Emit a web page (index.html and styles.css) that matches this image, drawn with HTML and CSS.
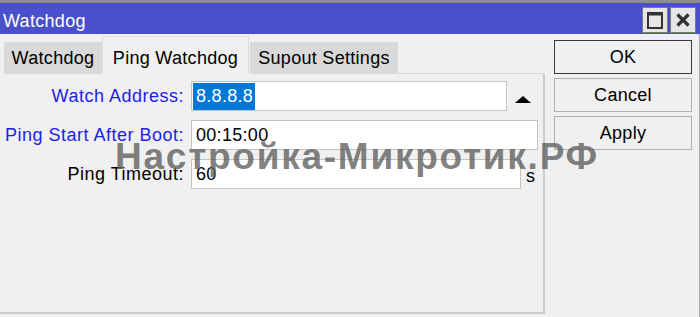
FILE: index.html
```html
<!DOCTYPE html>
<html>
<head>
<meta charset="utf-8">
<link rel="stylesheet" href="styles.css">
</head>
<body>
<div class="window">
  <div class="topstrip"></div>
  <div class="titlebar">
    <span class="title">Watchdog</span>
    <div class="winbtns">
      <div class="winbtn">
        <svg width="24" height="24" viewBox="0 0 24 24"><rect x="5" y="5" width="14" height="15" fill="none" stroke="#333" stroke-width="2"/><rect x="5" y="4.5" width="14" height="3" fill="#333"/></svg>
      </div>
      <div class="winbtn">
        <svg width="24" height="24" viewBox="0 0 24 24"><path d="M6.5 6.5 L17.5 17.5 M17.5 6.5 L6.5 17.5" stroke="#333" stroke-width="3.2" fill="none"/></svg>
      </div>
    </div>
  </div>
  <div class="main">
    <div class="left">
      <div class="tabs">
        <div class="tab tab-wd">Watchdog</div>
        <div class="tab tab-ping active">Ping Watchdog</div>
        <div class="tab tab-sup">Supout Settings</div>
        <div class="tab-fill"></div>
      </div>
      <div class="panel">
        <div class="form">
          <div class="label blue">Watch Address:</div>
          <div class="field">
            <div class="input w1"><span class="sel">8.8.8.8</span></div>
            <div class="uparrow"></div>
          </div>
          <div class="label blue">Ping Start After Boot:</div>
          <div class="field">
            <div class="input w2">00:15:00</div>
          </div>
          <div class="label">Ping Timeout:</div>
          <div class="field">
            <div class="input w3">60</div>
            <span class="unit">s</span>
          </div>
        </div>
      </div>
    </div>
    <div class="buttons">
      <div class="btn default">OK</div>
      <div class="btn">Cancel</div>
      <div class="btn">Apply</div>
    </div>
  </div>
  <div class="watermark">Настройка-Микротик.РФ</div>
</div>
</body>
</html>
```
FILE: styles.css
```css
html, body {
  margin: 0;
  padding: 0;
  background: #f0f0f0;
}
.window {
  position: relative;
  width: 700px;
  height: 317px;
  overflow: hidden;
  font-family: "Liberation Sans", Arial, sans-serif;
  font-size: 18px;
  letter-spacing: 0.3px;
  color: #000;
  background: #f0f0f0;
}
.topstrip {
  height: 3px;
  background: #8c8c8c;
}
.titlebar {
  height: 31px;
  box-sizing: border-box;
  background: #4a4fcb;
  display: flex;
  align-items: flex-start;
}
.title {
  color: #fff;
  padding-left: 3px;
  padding-top: 6px;
  line-height: 25px;
}
.winbtns {
  margin-left: auto;
  display: flex;
  gap: 2px;
  padding-top: 4px;
  padding-right: 4px;
}
.winbtn {
  width: 26px;
  height: 26px;
  box-sizing: border-box;
  background: #e6e6e6;
  border: 1px solid #7c7c7c;
  display: flex;
  align-items: center;
  justify-content: center;
}
.winbtn svg {
  display: block;
}
.main {
  display: flex;
  height: 283px;
  box-sizing: border-box;
  border-right: 1px solid #a8a8a8;
}
.left {
  width: 545px;
  display: flex;
  flex-direction: column;
}
.tabs {
  height: 40px;
  display: flex;
  align-items: flex-end;
  padding-left: 4px;
}
.tab {
  height: 32px;
  line-height: 32px;
  box-sizing: border-box;
  text-align: center;
  background: #d9d9d9;
  white-space: nowrap;
}
.tab-wd { width: 98px; }
.tab-ping { width: 147px; }
.tab-sup { width: 148px; margin-left: 1px; }
.tab.active {
  height: 38px;
  padding-top: 5px;
  background: #f0f0f0;
  border: 1px solid #dcdcdc;
  border-bottom: none;
}
.tab-fill {
  flex: 1;
  align-self: stretch;
  border-bottom: 1px solid #d6d6d6;
}
.panel {
  height: 240px;
  box-sizing: border-box;
  border-right: 2px solid #cbcbcb;
  border-bottom: 2px solid #cbcbcb;
  padding-top: 7px;
}
.form {
  display: grid;
  grid-template-columns: 184px 1fr;
  column-gap: 7px;
  row-gap: 9px;
  align-items: center;
}
.label {
  text-align: right;
  white-space: nowrap;
  letter-spacing: 0.5px;
}
.label.blue {
  color: #1d1ded;
}
.field {
  display: flex;
  align-items: center;
}
.input {
  height: 30px;
  box-sizing: border-box;
  background: #fff;
  border: 1px solid #c4c4c4;
  display: flex;
  align-items: center;
  padding-left: 4px;
}
.w1 { width: 316px; padding-left: 1px; }
.w2 { width: 347px; }
.w3 { width: 330px; }
.sel {
  background: #0078d7;
  color: #fff;
  line-height: 27px;
  padding: 0 2px 0 3px;
}
.uparrow {
  margin-left: 8px;
  margin-top: 6px;
  width: 0;
  height: 0;
  border-left: 8px solid transparent;
  border-right: 8px solid transparent;
  border-bottom: 7px solid #000;
}
.unit {
  margin-left: 5px;
  margin-top: 4px;
}
.buttons {
  width: 138px;
  margin-left: 9px;
  padding-top: 6px;
  display: flex;
  flex-direction: column;
  gap: 4px;
}
.btn {
  height: 34px;
  box-sizing: border-box;
  border: 1px solid #b0b0b0;
  background: #f0f0f0;
  display: flex;
  align-items: center;
  justify-content: center;
}
.btn.default {
  border-color: #3a3a3a;
}
.watermark {
  position: absolute;
  left: 115px;
  top: 138px;
  font-size: 37px;
  line-height: 37px;
  font-weight: bold;
  letter-spacing: 1.75px;
  color: rgba(95, 95, 95, 0.8);
  white-space: nowrap;
  pointer-events: none;
}
```
